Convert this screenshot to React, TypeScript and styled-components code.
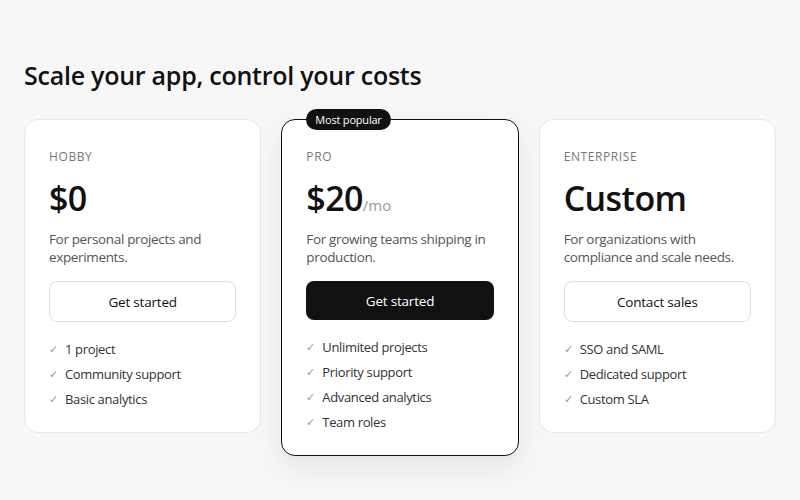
import React from 'react';
import styled, { createGlobalStyle } from 'styled-components';

const GlobalStyle = createGlobalStyle`
  body {
    margin: 0;
    background: #f7f7f7;
    font-family: 'Open Sans', 'Noto Sans', sans-serif;
    color: #111;
  }
`;

const Page = styled.main`
  padding: 58px 24px 40px;
`;

const Heading = styled.h1`
  margin: 0 0 27px;
  font-size: 25px;
  line-height: 34px;
  font-weight: 600;
  letter-spacing: -0.25px;
`;

const Grid = styled.div`
  display: grid;
  grid-template-columns: repeat(3, 1fr);
  gap: 20px;
  align-items: start;
`;

const Card = styled.section<{ $featured?: boolean }>`
  position: relative;
  background: #fff;
  border: 1px solid ${(p) => (p.$featured ? '#111' : '#e8e8e8')};
  border-radius: 14px;
  padding: 29px 24px 24px;
  box-shadow: ${(p) => (p.$featured ? '0 12px 30px rgba(0,0,0,0.08)' : 'none')};
`;

const Badge = styled.span`
  position: absolute;
  top: -11px;
  left: 24px;
  background: #111;
  color: #fff;
  font-size: 11px;
  line-height: 21px;
  padding: 0 9px;
  border-radius: 11px;
  letter-spacing: -0.2px;
`;

const Tier = styled.div`
  font-size: 12px;
  line-height: 16px;
  letter-spacing: 0.6px;
  color: #777;
  text-transform: uppercase;
`;

const Price = styled.div`
  margin-top: 11px;
  font-size: 34px;
  line-height: 44px;
  font-weight: 600;
  letter-spacing: -0.6px;
  color: #111;
`;

const Period = styled.span`
  font-size: 15px;
  line-height: 1;
  font-weight: 400;
  letter-spacing: 0;
  color: #999;
`;

const Blurb = styled.p`
  margin: 10px 0 15px;
  font-size: 13.5px;
  line-height: 18px;
  letter-spacing: -0.35px;
  color: #555;
`;

const Action = styled.button<{ $primary?: boolean }>`
  width: 100%;
  height: ${(p) => (p.$primary ? '39px' : '41px')};
  border-radius: 8px;
  border: ${(p) => (p.$primary ? 'none' : '1px solid #ddd')};
  background: ${(p) => (p.$primary ? '#111' : '#fff')};
  color: ${(p) => (p.$primary ? '#fff' : '#111')};
  font-family: inherit;
  font-size: 13.5px;
  letter-spacing: -0.2px;
  cursor: pointer;
`;

const Features = styled.ul`
  list-style: none;
  margin: 18px 0 0;
  padding: 0;
  display: flex;
  flex-direction: column;
  gap: 7px;
`;

const Feature = styled.li`
  display: flex;
  align-items: center;
  gap: 8px;
  font-size: 13px;
  line-height: 18px;
  letter-spacing: -0.35px;
  color: #333;
`;

const Check = styled.span`
  font-size: 11px;
  color: #999;
  width: 8px;
`;

type Plan = {
  tier: string;
  price: string;
  period?: string;
  blurb: string;
  action: string;
  features: string[];
  featured?: boolean;
};

const plans: Plan[] = [
  {
    tier: 'Hobby',
    price: '$0',
    blurb: 'For personal projects and experiments.',
    action: 'Get started',
    features: ['1 project', 'Community support', 'Basic analytics'],
  },
  {
    tier: 'Pro',
    price: '$20',
    period: '/mo',
    blurb: 'For growing teams shipping in production.',
    action: 'Get started',
    features: ['Unlimited projects', 'Priority support', 'Advanced analytics', 'Team roles'],
    featured: true,
  },
  {
    tier: 'Enterprise',
    price: 'Custom',
    blurb: 'For organizations with compliance and scale needs.',
    action: 'Contact sales',
    features: ['SSO and SAML', 'Dedicated support', 'Custom SLA'],
  },
];

export default function App() {
  return (
    <>
      <GlobalStyle />
      <Page>
        <Heading>Scale your app, control your costs</Heading>
        <Grid>
          {plans.map((plan) => (
            <Card key={plan.tier} $featured={plan.featured}>
              {plan.featured && <Badge>Most popular</Badge>}
              <Tier>{plan.tier}</Tier>
              <Price>
                {plan.price}
                {plan.period && <Period>{plan.period}</Period>}
              </Price>
              <Blurb>{plan.blurb}</Blurb>
              <Action $primary={plan.featured}>{plan.action}</Action>
              <Features>
                {plan.features.map((f) => (
                  <Feature key={f}>
                    <Check>✓</Check>
                    {f}
                  </Feature>
                ))}
              </Features>
            </Card>
          ))}
        </Grid>
      </Page>
    </>
  );
}
